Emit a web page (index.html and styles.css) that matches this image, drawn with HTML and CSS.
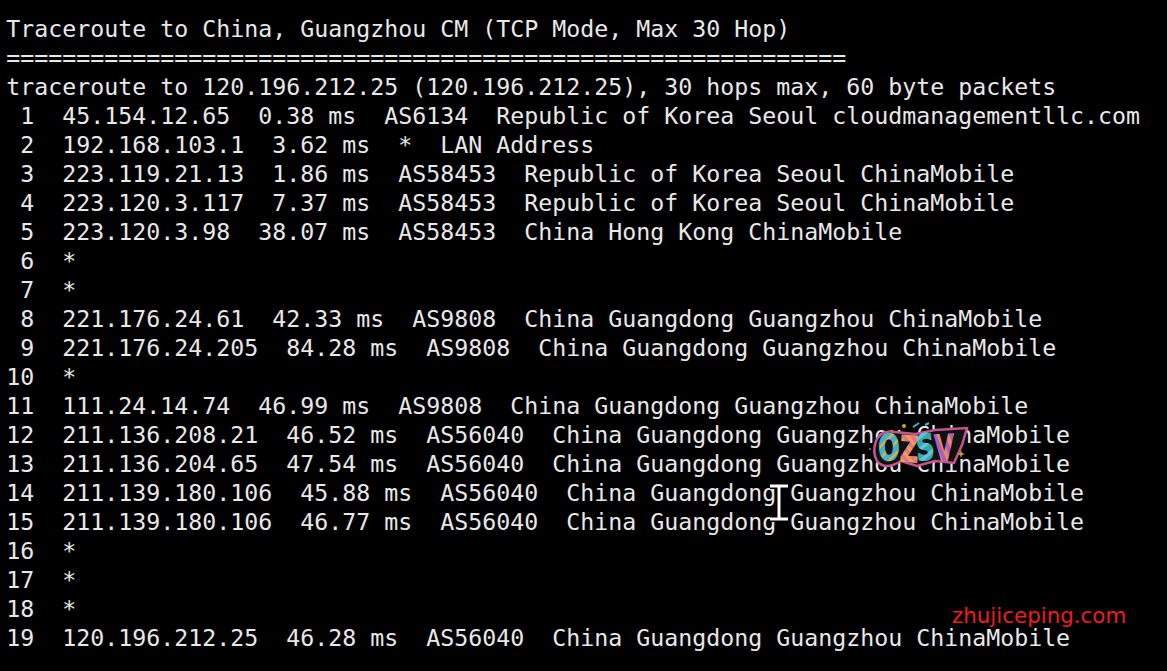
FILE: index.html
```html
<!DOCTYPE html>
<html lang="en">
<head>
<meta charset="utf-8">
<title>Traceroute</title>
<link rel="stylesheet" href="styles.css">
</head>
<body>
<main class="terminal">
<div class="line">Traceroute to China, Guangzhou CM (TCP Mode, Max 30 Hop)</div>
<div class="line">============================================================</div>
<div class="line">traceroute to 120.196.212.25 (120.196.212.25), 30 hops max, 60 byte packets</div>
<div class="line"> 1  45.154.12.65  0.38 ms  AS6134  Republic of Korea Seoul cloudmanagementllc.com</div>
<div class="line"> 2  192.168.103.1  3.62 ms  *  LAN Address</div>
<div class="line"> 3  223.119.21.13  1.86 ms  AS58453  Republic of Korea Seoul ChinaMobile</div>
<div class="line"> 4  223.120.3.117  7.37 ms  AS58453  Republic of Korea Seoul ChinaMobile</div>
<div class="line"> 5  223.120.3.98  38.07 ms  AS58453  China Hong Kong ChinaMobile</div>
<div class="line"> 6  *</div>
<div class="line"> 7  *</div>
<div class="line"> 8  221.176.24.61  42.33 ms  AS9808  China Guangdong Guangzhou ChinaMobile</div>
<div class="line"> 9  221.176.24.205  84.28 ms  AS9808  China Guangdong Guangzhou ChinaMobile</div>
<div class="line">10  *</div>
<div class="line">11  111.24.14.74  46.99 ms  AS9808  China Guangdong Guangzhou ChinaMobile</div>
<div class="line">12  211.136.208.21  46.52 ms  AS56040  China Guangdong Guangzhou ChinaMobile</div>
<div class="line">13  211.136.204.65  47.54 ms  AS56040  China Guangdong Guangzhou ChinaMobile</div>
<div class="line">14  211.139.180.106  45.88 ms  AS56040  China Guangdong Guangzhou ChinaMobile</div>
<div class="line">15  211.139.180.106  46.77 ms  AS56040  China Guangdong Guangzhou ChinaMobile</div>
<div class="line">16  *</div>
<div class="line">17  *</div>
<div class="line">18  *</div>
<div class="line">19  120.196.212.25  46.28 ms  AS56040  China Guangdong Guangzhou ChinaMobile</div>
</main>
<svg class="logo" viewBox="0 0 105 55" width="105" height="55" aria-label="OZSV">
  <defs>
    <pattern id="stripe-o" width="7" height="7" patternUnits="userSpaceOnUse" patternTransform="rotate(-35)">
      <rect width="7" height="7" fill="#41b3cc"/><rect y="5" width="7" height="2" fill="#e0b04a"/>
    </pattern>
    <pattern id="stripe-z" width="6" height="6" patternUnits="userSpaceOnUse" patternTransform="rotate(40)">
      <rect width="6" height="6" fill="#eaa24a"/><rect y="3" width="6" height="3" fill="#e96f92"/>
    </pattern>
    <pattern id="stripe-s" width="8" height="8" patternUnits="userSpaceOnUse" patternTransform="rotate(-30)">
      <rect width="8" height="8" fill="#35a9a8"/><rect y="5" width="8" height="3" fill="#5fc6da"/>
    </pattern>
    <pattern id="stripe-v" width="8" height="8" patternUnits="userSpaceOnUse" patternTransform="rotate(60)">
      <rect width="8" height="8" fill="#a95ec4"/><rect y="4" width="8" height="4" fill="#e98a6a"/>
    </pattern>
  </defs>
  <path class="logo-back" d="M11 21 Q16 9 30 12 L50 14 L70 10 L102 8 L97 25 L89 43 L70 41 L52 46 L36 41 Q20 51 12 41 Q7 32 11 21Z"/>
  <circle cx="39" cy="6" r="2" fill="#c9a13a"/>
  <path class="logo-dash" d="M48 7 L54 3 M60 5 L64 3"/>
  <circle cx="5" cy="29" r="1" fill="#c2558f"/>
  <path d="M95 33 l1 -3 l1 3 l3 1 l-3 1 l-1 3 l-1 -3 l-3 -1z" fill="#c9a13a"/>
  <text class="logo-text" transform="translate(14 41) scale(0.92 1.32)" rotate="-4 3 -6 -2"><tspan fill="url(#stripe-o)" stroke="url(#stripe-o)">O</tspan><tspan fill="url(#stripe-z)" stroke="url(#stripe-z)">Z</tspan><tspan fill="url(#stripe-s)" stroke="url(#stripe-s)">S</tspan><tspan fill="url(#stripe-v)" stroke="url(#stripe-v)">V</tspan></text>
</svg>
<svg class="cursor" viewBox="0 0 24 40" width="24" height="40" aria-hidden="true">
  <path class="cursor-halo" d="M3 3H21M12 3V36M3 36H21"/>
  <path class="cursor-beam" d="M3 3H21M12 3V36M3 36H21"/>
</svg>
<div class="mark">zhujiceping.com</div>
</body>
</html>
```
FILE: styles.css
```css
html, body {
  margin: 0;
  height: 100%;
  overflow: hidden;
  background: #000;
}
.terminal {
  padding: 14px 0 0 6.300px;
  color: #e8e8e8;
  font-family: "DejaVu Sans Mono", monospace;
  font-size: 23.25px;
  line-height: 29px;
}
.line {
  white-space: pre;
  height: 29px;
}
.logo {
  position: absolute;
  left: 865px;
  top: 420px;
}
.logo-back {
  fill: #111;
  stroke: #c2558f;
  stroke-width: 2.500;
}
.logo-dash {
  fill: none;
  stroke: #3fb6c9;
  stroke-width: 2;
}
.logo-text {
  font-family: "DejaVu Sans", sans-serif;
  font-weight: 700;
  font-size: 27px;
  letter-spacing: -0.5px;
  stroke-width: 1.2;
}
.cursor {
  position: absolute;
  left: 767px;
  top: 483px;
}
.cursor-halo {
  fill: none;
  stroke: #000;
  stroke-width: 6;
}
.cursor-beam {
  fill: none;
  stroke: #fff;
  stroke-width: 3;
}
.mark {
  position: absolute;
  left: 952px;
  top: 603px;
  color: #f01c1c;
  font-family: "DejaVu Sans", sans-serif;
  font-size: 21.4px;
  line-height: 26px;
}
```
